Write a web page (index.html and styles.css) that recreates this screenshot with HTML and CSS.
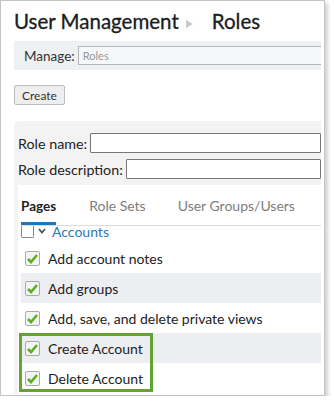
FILE: index.html
```html
<!DOCTYPE html>
<html lang="en">
<head>
    <meta charset="UTF-8">
    <title>Roles</title>
    <link rel="stylesheet" href="styles.css">
</head>
<body>
    <div class="frame">
        <div class="content">
            <h1 class="title">User Management<span class="crumb-arrow"></span><span class="title-page">Roles</span></h1>

            <div class="manage-bar">
                <label for="manage">Manage:</label>
                <input type="text" id="manage" placeholder="Roles">
            </div>

            <button class="btn">Create</button>

            <div class="role-panel">
                <div class="field">
                    <label for="roleName">Role name:</label>
                    <input type="text" id="roleName">
                </div>
                <div class="field">
                    <label for="roleDesc">Role description:</label>
                    <input type="text" id="roleDesc">
                </div>

                <div class="tab-box">
                    <div class="tabs">
                        <span class="tab active">Pages</span>
                        <span class="tab">Role Sets</span>
                        <span class="tab">User Groups/Users</span>
                    </div>

                    <div class="group-head">
                        <span class="box"></span>
                        <svg class="chevron" width="8" height="6" viewBox="0 0 8 6"><path d="M1 1 L4 4.5 L7 1" fill="none" stroke="#555" stroke-width="1.8"/></svg>
                        <span class="group-name">Accounts</span>
                    </div>

                    <div class="items">
                        <div class="item"><span class="check"></span>Add account notes</div>
                        <div class="item alt"><span class="check"></span>Add groups</div>
                        <div class="item"><span class="check"></span>Add, save, and delete private views</div>
                        <div class="item alt"><span class="check"></span>Create Account</div>
                        <div class="item"><span class="check"></span>Delete Account</div>
                        <div class="callout"></div>
                    </div>
                </div>
            </div>
        </div>
    </div>
</body>
</html>
```

FILE: styles.css
```css
body {
    margin: 0;
    font-family: Lato, "Open Sans", sans-serif;
    color: #222;
    background: #fff;
}
.frame {
    width: 323px;
    height: 394px;
    border: 1px solid #c4c4c4;
    box-shadow: 3px 3px 4px rgba(0,0,0,0.18);
    overflow: hidden;
    background: #fff;
}
.content {
    margin-left: 13px;
    width: 307px;
    overflow: hidden;
}
.title {
    margin: 6px 0 0 0;
    font-size: 20.5px;
    font-weight: normal;
    line-height: 28px;
    color: #1c1c1c;
    white-space: nowrap;
    display: flex;
    align-items: center;
    -webkit-text-stroke: 0.3px #1c1c1c;
}
.crumb-arrow {
    display: inline-block;
    width: 0;
    height: 0;
    border-top: 4px solid transparent;
    border-bottom: 4px solid transparent;
    border-left: 7px solid #c8c8c8;
    margin: 5px 0 0 7px;
}
.title-page {
    margin-left: 19px;
}
.manage-bar {
    margin-top: 6px;
    width: 320px;
    height: 29px;
    background: #eef1f4;
    display: flex;
    align-items: center;
    padding-left: 10px;
    box-sizing: border-box;
}
.manage-bar label {
    font-size: 13.5px;
    color: #333;
    margin-right: 3px;
}
.manage-bar input {
    flex: 1;
    height: 19px;
    box-sizing: border-box;
    border: 1px solid #b5b5b5;
    background: #f5f7f9;
    font-family: inherit;
    font-size: 11px;
    padding: 0 4px;
}
.manage-bar input::placeholder {
    color: #999;
}
.btn {
    display: block;
    margin-top: 15px;
    height: 20px;
    padding: 0 7px;
    font-family: inherit;
    font-size: 12px;
    color: #333;
    background: #eee;
    border: 1px solid #bdbdbd;
    border-radius: 2px;
}
.role-panel {
    margin-top: 16px;
    background: #f3f3f3;
    border-radius: 5px 0 0 0;
    padding: 12px 0 0 4px;
}
.field {
    display: flex;
    align-items: center;
    height: 20px;
    margin-bottom: 6px;
    font-size: 14.3px;
    color: #222;
}
.field label {
    margin-right: 3px;
    white-space: nowrap;
}
.field input {
    flex: 1;
    height: 20px;
    box-sizing: border-box;
    border: 1px solid #777;
    border-radius: 1px;
    background: #fff;
    min-width: 0;
}
.tab-box {
    background: #fff;
    padding: 0 0 0 3px;
    height: 222px;
}
.tabs {
    display: flex;
    font-size: 14px;
    border-bottom: 1px solid #dcdcdc;
    height: 41px;
    box-sizing: border-box;
    white-space: nowrap;
}
.tab {
    flex: none;
    color: #7d7d7d;
    margin-right: 32px;
    padding-top: 13px;
    line-height: 16px;
    position: relative;
}
.tab.active {
    color: #222;
    font-weight: bold;
    font-size: 13.5px;
    margin-right: 33px;
}
.tab.active::after {
    content: "";
    position: absolute;
    left: 0;
    right: 0;
    bottom: 0;
    height: 3px;
    background: #1d75bd;
}
.group-head {
    display: flex;
    align-items: flex-start;
    height: 13px;
}
.box {
    width: 11px;
    height: 11px;
    border: 1px solid #888;
    border-top: none;
    border-radius: 0 0 2px 2px;
    background: #fff;
}
.chevron {
    margin: 2px 0 0 4px;
}
.group-name {
    margin-left: 6px;
    font-size: 14px;
    color: #2a7ab8;
    line-height: 12px;
}
.items {
    position: relative;
    margin-top: 4px;
}
.item {
    height: 30px;
    display: flex;
    align-items: center;
    font-size: 14px;
    color: #222;
    padding-left: 4px;
    white-space: nowrap;
}
.item.alt {
    background: #eceef1;
}
.check {
    width: 13px;
    height: 13px;
    border: 1px solid #aaa;
    border-radius: 2px;
    background: #f4f4f4 url("data:image/svg+xml;utf8,<svg xmlns='http://www.w3.org/2000/svg' viewBox='0 0 13 13'><path d='M2 7 L5 10 L11 3' fill='none' stroke='%235cae24' stroke-width='2.6'/></svg>") no-repeat center;
    margin-right: 8px;
    flex: none;
}
.callout {
    position: absolute;
    left: -2px;
    top: 90px;
    width: 128px;
    height: 53px;
    border: 3px solid #62a331;
}
```
